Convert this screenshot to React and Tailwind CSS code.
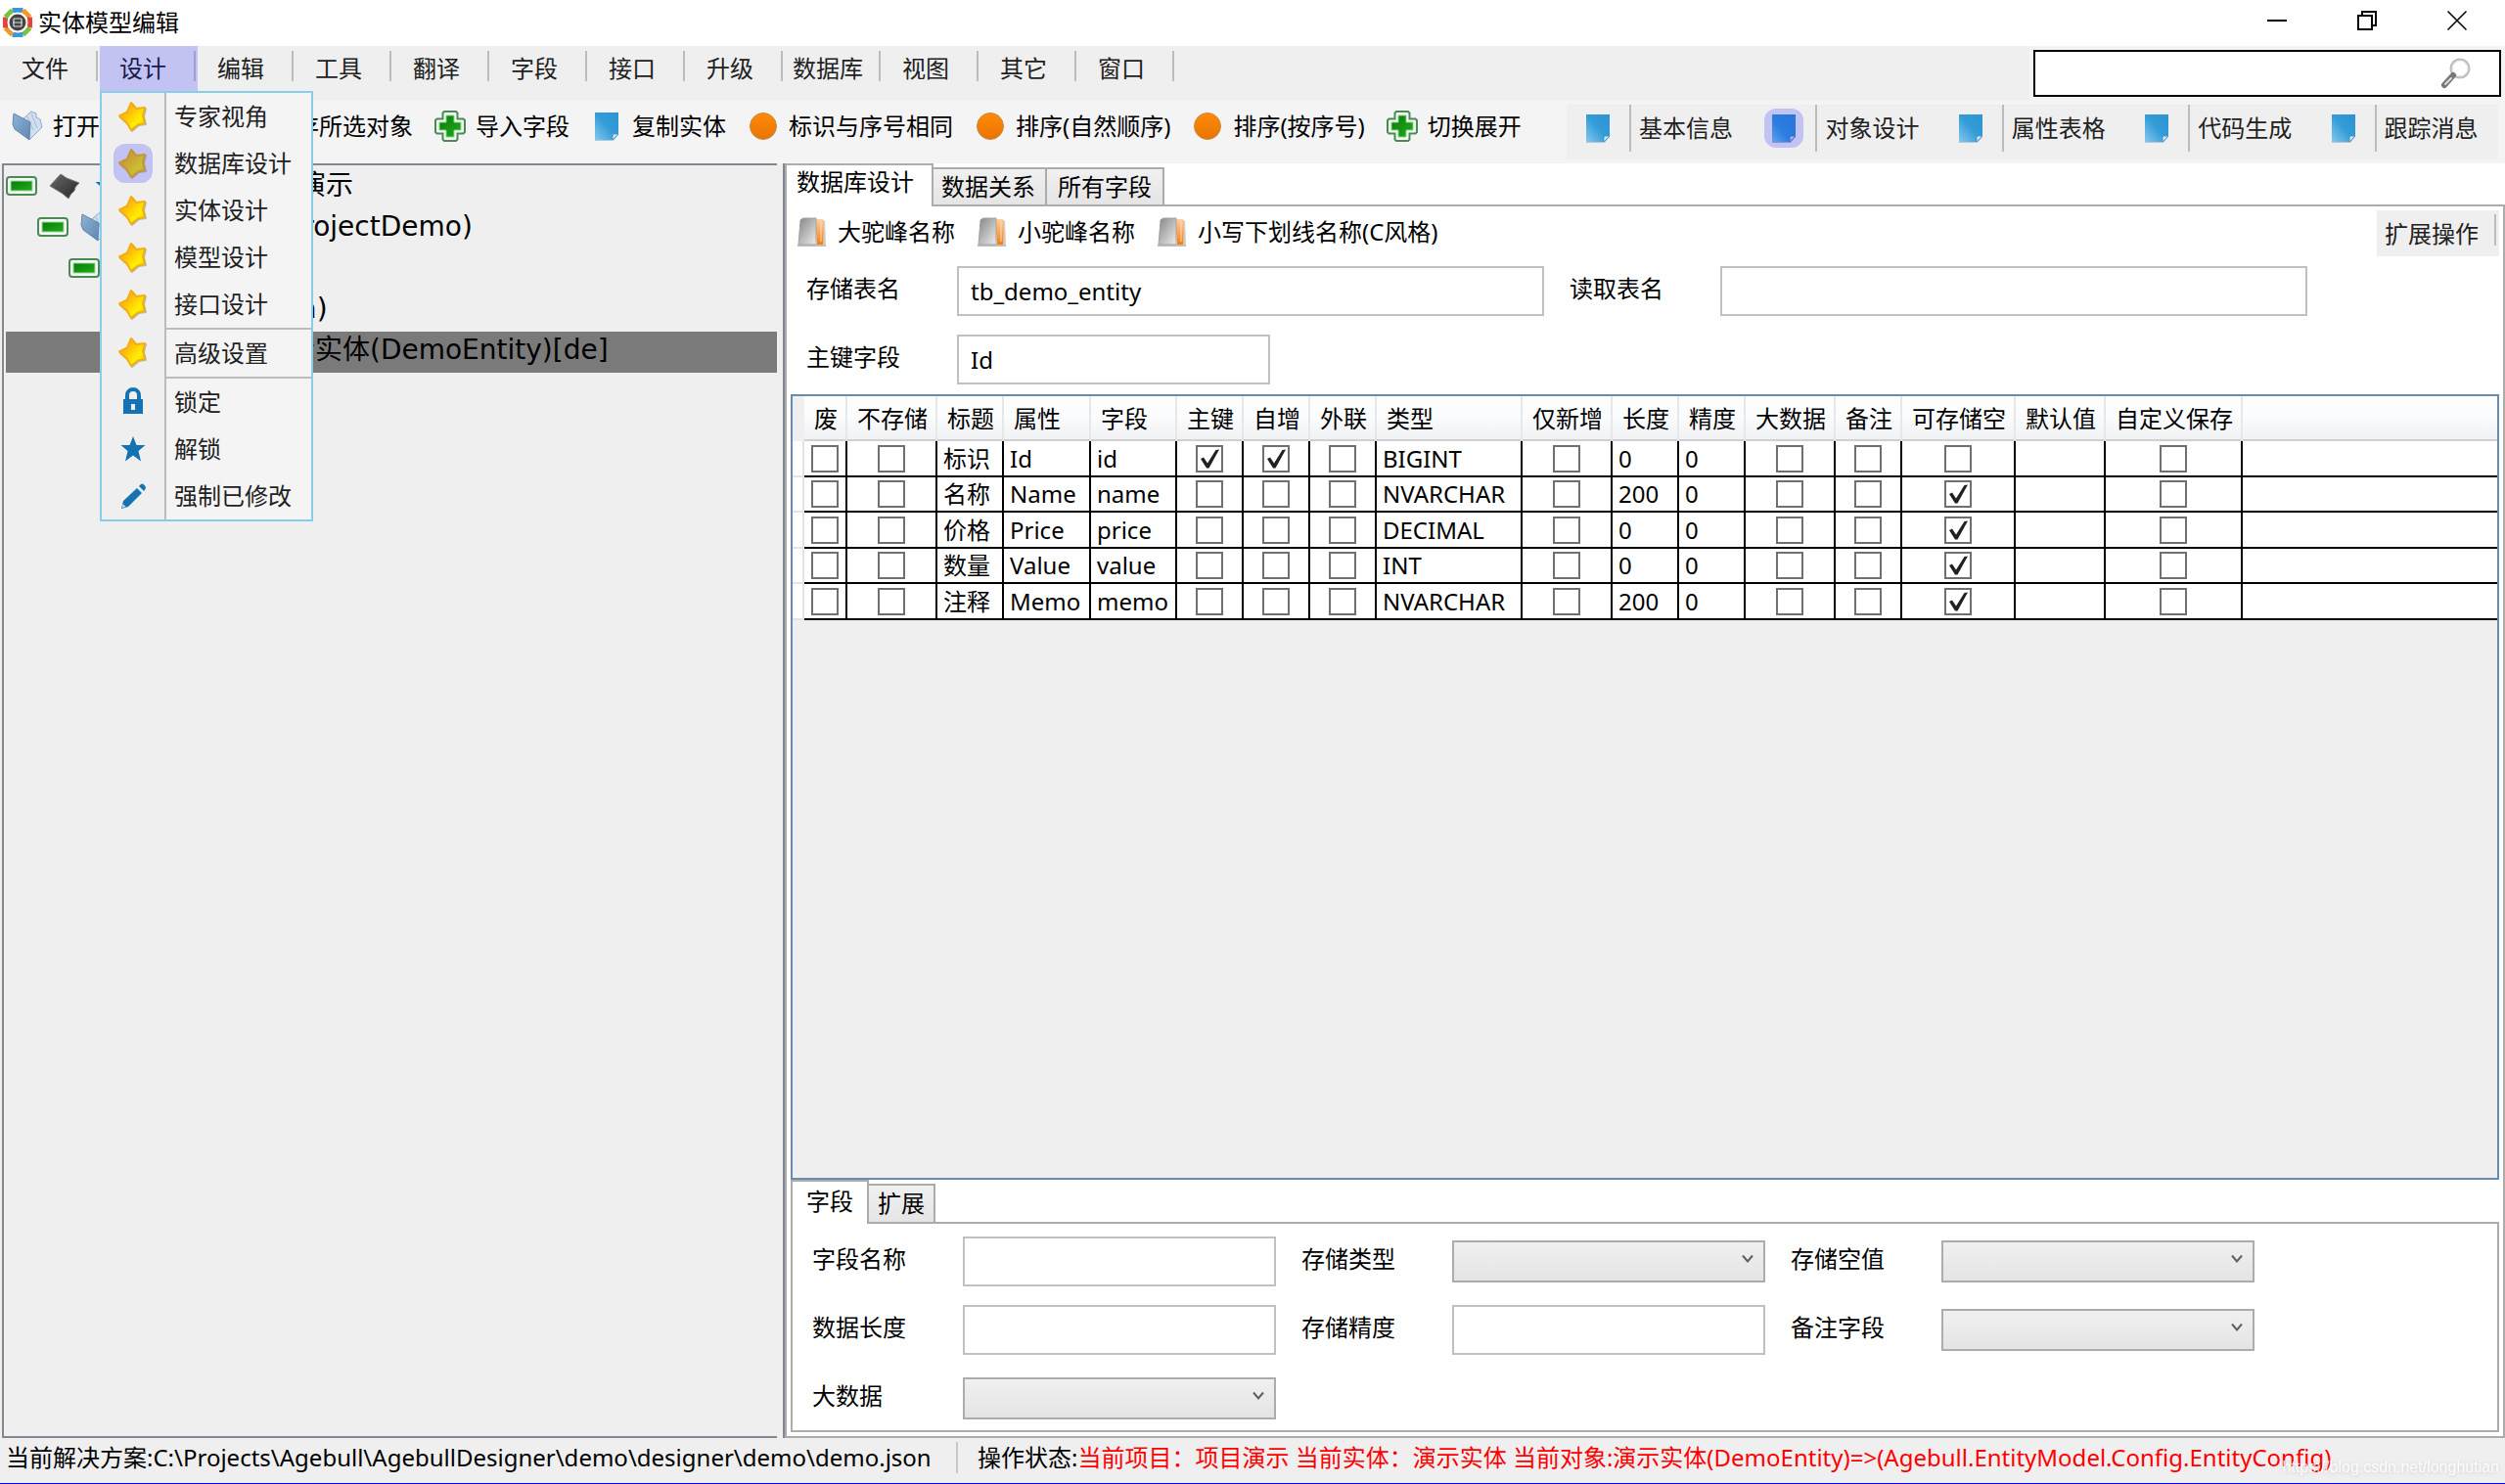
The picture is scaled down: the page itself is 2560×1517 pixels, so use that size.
import React from 'react'

const menus = ['文件', '设计', '编辑', '工具', '翻译', '字段', '接口', '升级', '数据库', '视图', '其它', '窗口']

const designMenu = [
  { label: '专家视角', icon: 'star' },
  { label: '数据库设计', icon: 'star', active: true },
  { label: '实体设计', icon: 'star' },
  { label: '模型设计', icon: 'star' },
  { label: '接口设计', icon: 'star' },
  { label: '高级设置', icon: 'star', divided: true },
  { label: '锁定', icon: 'lock', divided: true },
  { label: '解锁', icon: 'blueStar' },
  { label: '强制已修改', icon: 'pencil' },
]

const tools = [
  { label: '打开', icon: 'folder' },
  { label: '保存', icon: 'page' },
  { label: '保存所选对象', icon: 'page' },
  { label: '导入字段', icon: 'plus' },
  { label: '复制实体', icon: 'page' },
  { label: '标识与序号相同', icon: 'circle' },
  { label: '排序(自然顺序)', icon: 'circle' },
  { label: '排序(按序号)', icon: 'circle' },
  { label: '切换展开', icon: 'plus' },
]

const views = ['基本信息', '对象设计', '属性表格', '代码生成', '跟踪消息']

const columns = [
  { key: 'discard', title: '废', width: 'w-[44px]', check: true },
  { key: 'noStore', title: '不存储', width: 'w-[92px]', check: true },
  { key: 'caption', title: '标题', width: 'w-[68px]' },
  { key: 'prop', title: '属性', width: 'w-[89px]' },
  { key: 'field', title: '字段', width: 'w-[88px]' },
  { key: 'primary', title: '主键', width: 'w-[68px]', check: true },
  { key: 'identity', title: '自增', width: 'w-[68px]', check: true },
  { key: 'link', title: '外联', width: 'w-[68px]', check: true },
  { key: 'type', title: '类型', width: 'w-[149px]' },
  { key: 'insertOnly', title: '仅新增', width: 'w-[92px]', check: true },
  { key: 'length', title: '长度', width: 'w-[68px]' },
  { key: 'scale', title: '精度', width: 'w-[68px]' },
  { key: 'blob', title: '大数据', width: 'w-[92px]', check: true },
  { key: 'memo', title: '备注', width: 'w-[68px]', check: true },
  { key: 'nullable', title: '可存储空', width: 'w-[116px]', check: true },
  { key: 'initial', title: '默认值', width: 'w-[92px]' },
  { key: 'custom', title: '自定义保存', width: 'w-[140px]', check: true },
]

const rows = [
  { caption: '标识', prop: 'Id', field: 'id', type: 'BIGINT', length: 0, scale: 0, primary: true, identity: true },
  { caption: '名称', prop: 'Name', field: 'name', type: 'NVARCHAR', length: 200, scale: 0, nullable: true },
  { caption: '价格', prop: 'Price', field: 'price', type: 'DECIMAL', length: 0, scale: 0, nullable: true },
  { caption: '数量', prop: 'Value', field: 'value', type: 'INT', length: 0, scale: 0, nullable: true },
  { caption: '注释', prop: 'Memo', field: 'memo', type: 'NVARCHAR', length: 200, scale: 0, nullable: true },
]

const Gradients = () => (
  <svg className="absolute h-0 w-0" aria-hidden="true">
    <defs>
      <linearGradient id="gold" x1="0" y1="0" x2="1" y2="1">
        <stop offset="0" stopColor="#ff9c00" />
        <stop offset="0.4" stopColor="#ffc20a" />
        <stop offset="0.7" stopColor="#fff000" />
        <stop offset="1" stopColor="#ffc400" />
      </linearGradient>
      <linearGradient id="sheet" x1="1" y1="0" x2="0" y2="1">
        <stop offset="0" stopColor="#2a93d1" />
        <stop offset="0.5" stopColor="#349dd8" />
        <stop offset="1" stopColor="#86c8ee" />
      </linearGradient>
      <linearGradient id="sheetOn" x1="1" y1="0" x2="0" y2="1">
        <stop offset="0" stopColor="#2a74d8" />
        <stop offset="0.6" stopColor="#2c7ee0" />
        <stop offset="1" stopColor="#5fa3ee" />
      </linearGradient>
      <linearGradient id="orange" x1="0" y1="0" x2="0" y2="1">
        <stop offset="0" stopColor="#ff8a08" />
        <stop offset="1" stopColor="#e87400" />
      </linearGradient>
      <linearGradient id="green" x1="0" y1="0" x2="1" y2="1">
        <stop offset="0" stopColor="#0a7a0a" />
        <stop offset="1" stopColor="#1fae1a" />
      </linearGradient>
      <linearGradient id="steel" x1="0" y1="0" x2="1" y2="1">
        <stop offset="0" stopColor="#8fb2d6" />
        <stop offset="1" stopColor="#5f87b3" />
      </linearGradient>
      <linearGradient id="silver" x1="0" y1="0" x2="1" y2="1">
        <stop offset="0" stopColor="#858585" />
        <stop offset="1" stopColor="#ececec" />
      </linearGradient>
      <linearGradient id="amber" x1="0" y1="0" x2="0" y2="1">
        <stop offset="0" stopColor="#ffcf9e" />
        <stop offset="1" stopColor="#f57c0a" />
      </linearGradient>
      <linearGradient id="coal" x1="0" y1="0" x2="1" y2="1">
        <stop offset="0" stopColor="#6a6a6a" />
        <stop offset="1" stopColor="#262626" />
      </linearGradient>
    </defs>
  </svg>
)

const shapes = {
  star: (
    <>
      <path d="M15 3L20 9L29 8L27 16L29 24L22 25L15 31L11 24L3 17L11 12Z" fill="#8f8570" stroke="#8f8570" strokeWidth="2" strokeLinejoin="round" opacity="0.5" />
      <path d="M14 2L19 8L28 7L26 15L28 23L21 24.500L14 30L10 23L2 15.500L10 11.500Z" fill="url(#gold)" stroke="#f5ae10" strokeWidth="2" strokeLinejoin="round" />
    </>
  ),
  page: (
    <>
      <path d="M4 3H28V25L23 31H4Z" fill="#9bb4c4" opacity="0.7" />
      <path d="M4 2H28V24L22 30H4Z" fill="url(#sheet)" />
      <path d="M28 24H23.500Q22 24 22 25.500V30Z" fill="#cfe6f5" stroke="#3b8fc2" strokeWidth="0.8" />
    </>
  ),
  pageOn: (
    <>
      <path d="M4 3H28V25L23 31H4Z" fill="#6f7fc0" opacity="0.7" />
      <path d="M4 2H28V24L22 30H4Z" fill="url(#sheetOn)" />
      <path d="M28 24H23.500Q22 24 22 25.500V30Z" fill="#9db4f0" stroke="#2f62c4" strokeWidth="0.8" />
    </>
  ),
  plus: (
    <>
      <path d="M10 1H22L23.500 2.500V8.500H29.500L31 10V22L29.500 23.500H23.500V29.500L22 31H10L8.500 29.500V23.500H2.500L1 22V10L2.500 8.500H8.500V2.500Z" fill="#f3faf3" stroke="#4c8a55" strokeWidth="2" />
      <path d="M12 5H20V12H27V20H20V27H12V20H5V12H12Z" fill="url(#green)" stroke="#8fcf8f" strokeWidth="1" />
    </>
  ),
  circle: <circle cx="16" cy="16" r="13.500" fill="url(#orange)" stroke="#c98a48" />,
  folder: (
    <>
      <path d="M11 9L20 1L25 3V7L29 9L31 17L18 30L12 22Z" fill="#cfdfef" stroke="#8fa9c4" />
      <path d="M16 6L22 20M20 3L26 18" stroke="#a5bfd9" />
      <path d="M2 3L19 12L18 30L3 19L1 14Z" fill="url(#steel)" stroke="#6486ab" />
    </>
  ),
  book: (
    <>
      <path d="M1 29H30V31H1Z" fill="#000" opacity="0.25" />
      <path d="M26 3L29 5L30 29H26Z" fill="#cfcac6" />
      <path d="M19 3H26L28 6L27 29H21Z" fill="url(#amber)" />
      <path d="M25 5L25 26" stroke="#ffdcb8" />
      <path d="M4 4Q5 2 8 2H20V29H2Z" fill="url(#silver)" stroke="#a4a4a4" />
    </>
  ),
  diamond: (
    <path d="M1 16L12 4L18 8L31 13Q26 17 26 21Q22 24 20 29L14 24Z" fill="url(#coal)" stroke="#777" />
  ),
  lock: (
    <path d="M6 14H8V10A8 8 0 0 1 24 10V14H26V29H6ZM12 14H20V10A4 4 0 0 0 12 10ZM14 19V25H18V19Z" fill="#1573b3" fillRule="evenodd" />
  ),
  blueStar: (
    <path d="M16 3L19.500 12H28.500L21.500 18L24 28.500L16 22.500L8 28.500L10.500 18L3.500 12H12.500Z" fill="#1573b3" />
  ),
  pencil: (
    <>
      <path d="M20 8L25 13L11 27L4 29L6 21Z" fill="#1573b3" />
      <path d="M22 6L24 4Q25.500 3 27 4.500L28.500 6Q29.500 7.500 28.500 9L27 11Z" fill="#1573b3" />
      <path d="M5.500 24L8.500 27L5 28Z" fill="#cfe3f2" />
    </>
  ),
}

const Icon = ({ name }) => (
  <svg viewBox="0 0 32 32" className="h-8 w-8 shrink-0" fill="none" aria-hidden="true">
    {shapes[name]}
  </svg>
)

const Expander = () => (
  <button className="shrink-0" aria-label="折叠">
    <svg viewBox="0 0 32 20" className="h-5 w-8" fill="none">
      <rect x="1" y="1" width="30" height="18" rx="3" fill="#f3faf3" stroke="#4c8a55" strokeWidth="2" />
      <rect x="5" y="5" width="22" height="10" fill="url(#green)" stroke="#a5d6a5" />
    </svg>
  </button>
)

const Logo = () => (
  <svg viewBox="0 0 30 30" className="h-[30px] w-[30px]" fill="none">
    <g strokeWidth="5">
      <path d="M9.500 2.500H20.500" stroke="#3a97dc" />
      <path d="M20.500 2.500L27.500 9.500" stroke="#f09a2c" />
      <path d="M27.500 9.500V20.500" stroke="#e8403c" />
      <path d="M27.500 20.500L20.500 27.500" stroke="#74c43c" />
      <path d="M20.500 27.500H9.500" stroke="#3a97dc" />
      <path d="M9.500 27.500L2.500 20.500" stroke="#f09a2c" />
      <path d="M2.500 20.500V9.500" stroke="#e8403c" />
      <path d="M2.500 9.500L9.500 2.500" stroke="#74c43c" />
    </g>
    <circle cx="15" cy="15" r="10.500" fill="#fff" />
    <circle cx="15" cy="15" r="8.500" fill="#444" />
    <path d="M11 11H19M10 15H20M11 19H19M11 11V19M19 11V19" stroke="#ddd" strokeWidth="1.200" />
  </svg>
)

const TitleBar = () => (
  <header className="flex h-[47px] shrink-0 items-start justify-between bg-white px-[3px]">
    <div className="flex items-center gap-1.5 pt-[7px]">
      <Logo />
      <h1 className="leading-8">实体模型编辑</h1>
    </div>
    <div className="flex">
      <button className="flex h-[42px] w-[92px] items-center justify-center" aria-label="最小化">
        <svg viewBox="0 0 20 20" className="h-5 w-5" stroke="#000" strokeWidth="2">
          <path d="M0 10H20" />
        </svg>
      </button>
      <button className="flex h-[42px] w-[92px] items-center justify-center" aria-label="还原">
        <svg viewBox="0 0 20 20" className="h-5 w-5" stroke="#000" strokeWidth="2" fill="none">
          <path d="M1 5H15V19H1ZM5 5V1H19V15H15" />
        </svg>
      </button>
      <button className="flex h-[42px] w-[92px] items-center justify-center" aria-label="关闭">
        <svg viewBox="0 0 20 20" className="h-5 w-5" stroke="#000" strokeWidth="1.500">
          <path d="M0.500 0.500L19.500 19.500M19.500 0.500L0.500 19.500" />
        </svg>
      </button>
    </div>
  </header>
)

const DesignMenu = () => (
  <ul className="absolute left-0 top-full z-20 w-[218px] border-2 border-[#87ceeb] bg-[#f4f4f4] text-[#212121]">
    {designMenu.map((item) => (
      <li key={item.label}>
        <button className="flex w-full text-left">
          <span className="flex w-16 shrink-0 items-center justify-center bg-[#efefef]">
            <span className={item.active ? 'rounded-xl bg-[#c3c3f3] p-1' : 'p-1'}>
              <span className={item.active ? 'block opacity-80 brightness-80' : 'block'}>
                <Icon name={item.icon} />
              </span>
            </span>
          </span>
          <span
            className={
              item.divided
                ? 'box-content h-12 flex-1 border-l-2 border-t-2 border-[#bcbcbc] pl-2 leading-[48px]'
                : 'h-12 flex-1 border-l-2 border-[#bcbcbc] pl-2 leading-[48px]'
            }
          >
            {item.label}
          </span>
        </button>
      </li>
    ))}
  </ul>
)

const MenuBar = () => (
  <div className="flex h-14 shrink-0 justify-between pl-0.5">
    <nav className="flex flex-1 items-start bg-[#efefef] text-[#212121]">
      {menus.map((name) => (
        <div key={name} className="relative">
          <button
            className={
              name === '设计'
                ? 'flex h-[46px] w-[100px] items-start bg-[#c3c3f3] pt-[5px] text-[#1a1a4a]'
                : 'flex h-[46px] w-[100px] items-start pt-[5px]'
            }
          >
            <span className="w-[88px] text-center leading-9">{name}</span>
            <span className={name === '设计' ? 'ml-2 h-[31px] w-0.5 bg-[#a0a0c8]' : 'ml-2 h-[31px] w-0.5 bg-[#bcbcbc]'} />
          </button>
          {name === '设计' && <DesignMenu />}
        </div>
      ))}
    </nav>
    <div className="bg-[#f4f4f4] px-1 pt-1">
      <label className="flex h-12 w-[478px] items-center border-2 border-black bg-white pr-7">
        <input type="text" aria-label="搜索" className="h-full min-w-0 flex-1 px-2 outline-none" />
        <svg viewBox="0 0 32 32" className="h-8 w-8" fill="none">
          <circle cx="20" cy="11" r="9" stroke="#bdbdbd" strokeWidth="3" />
          <circle cx="20" cy="11" r="8" stroke="#efefef" />
          <path d="M13 18L4 28" stroke="#777" strokeWidth="6" strokeLinecap="round" />
          <path d="M11 21L5 27" stroke="#ddd" strokeWidth="2" strokeLinecap="round" />
        </svg>
      </label>
    </div>
  </div>
)

const ToolButton = ({ icon, label }) => (
  <button className="flex items-center gap-2.5 whitespace-nowrap">
    <Icon name={icon} />
    <span className="leading-8">{label}</span>
  </button>
)

const ToolBar = () => (
  <div className="flex h-16 shrink-0 justify-between bg-[#f4f4f4] pl-3 pr-[7px]">
    <div className="flex items-start gap-[22px] pt-2.5">
      {tools.map((tool) => (
        <ToolButton key={tool.label} icon={tool.icon} label={tool.label} />
      ))}
    </div>
    <div className="mt-1 grid h-14 w-[952px] grid-cols-5 bg-[#efefef] text-[#212121]">
      {views.map((view) => (
        <button key={view} className="flex h-12 items-center text-left">
          <span className="flex w-16 justify-center">
            <span className={view === '对象设计' ? 'rounded-xl bg-[#c3c3f3] p-1' : 'p-1'}>
              <Icon name={view === '对象设计' ? 'pageOn' : 'page'} />
            </span>
          </span>
          <span className="h-full whitespace-nowrap border-l-2 border-[#bcbcbc] pl-2 leading-[48px]">{view}</span>
        </button>
      ))}
    </div>
  </div>
)

const TreeRow = ({ indent = '', expander = false, icons = [], selected = false, children }) => (
  <li className={selected ? 'h-[42px] bg-[#7a7a7a]' : 'h-[42px]'}>
    <div className={`flex h-[38px] items-center gap-3 ${indent}`}>
      {expander ? <Expander /> : <span className="w-8" />}
      {icons.map((name, index) => (
        <Icon key={index} name={name} />
      ))}
      <span className="whitespace-nowrap">{children}</span>
    </div>
  </li>
)

const ModelTree = () => (
  <aside className="w-[792px] shrink-0 border-y-2 border-l-2 border-[#828790] pl-0.5 pt-0.5">
    <ul className="font-['DejaVu_Sans','Noto_Sans_CJK_SC',sans-serif] text-[28px] leading-9">
      <TreeRow expander icons={['diamond', 'blueStar']}>Demo - 项目演示</TreeRow>
      <TreeRow indent="pl-8" expander icons={['folder', 'blueStar']}>项目演示(ProjectDemo)</TreeRow>
      <TreeRow indent="pl-16" expander icons={['folder']}>实体</TreeRow>
      <TreeRow indent="pl-24" icons={['page']}>实体(Data)</TreeRow>
      <TreeRow indent="pl-32" selected icons={['page', 'blueStar']}>演示实体(DemoEntity)[de]</TreeRow>
    </ul>
  </aside>
)

const Field = ({ id, label, type = 'text', value = '', width = 'w-80', labelWidth = 'w-[154px]' }) => (
  <div className="flex h-[51px] items-center">
    <label htmlFor={id} className={`${labelWidth} shrink-0 pb-1.5 leading-8`}>{label}</label>
    {type === 'select' ? (
      <div className={`relative ${width}`}>
        <select
          id={id}
          className="block h-[43px] w-full appearance-none border-2 border-[#acacac] bg-linear-to-b from-[#f0f0f0] to-[#e4e4e4]"
        />
        <svg viewBox="0 0 12 10" className="pointer-events-none absolute right-3 top-3.5 h-2.5 w-3" fill="none" stroke="#606060" strokeWidth="2">
          <path d="M1 1.500L6 7.500L11 1.500" />
        </svg>
      </div>
    ) : (
      <input
        id={id}
        type="text"
        defaultValue={value}
        className={`h-[51px] border-2 border-[#c0c0c0] bg-white px-3 outline-none ${width}`}
      />
    )}
  </div>
)

const CheckBox = ({ checked, label }) => (
  <span className="relative mx-auto block h-7 w-7">
    <input
      type="checkbox"
      defaultChecked={checked}
      aria-label={label}
      className="peer block h-7 w-7 appearance-none border-2 border-[#707070] bg-white"
    />
    <svg viewBox="0 0 28 28" className="pointer-events-none absolute inset-0 hidden h-7 w-7 peer-checked:block">
      <path d="M5 14L8 12.500L12 18.500L20.500 5L24 4.500L13.500 23.500H11Z" fill="#212121" />
    </svg>
  </span>
)

const FieldTable = () => (
  <div className="flex-1 border-2 border-[#688caf] bg-[#efefef]">
    <table className="w-full table-fixed border-separate border-spacing-0 text-left">
      <thead>
        <tr className="h-[46px] bg-linear-to-b from-white via-[#fafbfc] to-[#eff0f3]">
          <th className="w-3 bg-[#efefef]" />
          {columns.map((col) => (
            <th
              key={col.key}
              className={`whitespace-nowrap border-b-2 border-r-2 border-b-[#d0d0d0] border-r-[#e6e7e9] p-0 pl-2.5 pt-0.5 font-normal leading-8 ${col.width}`}
            >
              {col.title}
            </th>
          ))}
          <th className="border-b-2 border-[#d0d0d0]" />
        </tr>
      </thead>
      <tbody>
        {rows.map((row) => (
          <tr key={row.prop} className="bg-white odd:h-[37px] even:h-[36px]">
            <td className="border-b-2 border-r-2 border-[#e4e4e4] p-0" />
            {columns.map((col) => (
              <td key={col.key} className="whitespace-nowrap border-b-2 border-r-2 border-black p-0 leading-8">
                {col.check ? (
                  <CheckBox checked={!!row[col.key]} label={`${row.caption} ${col.title}`} />
                ) : (
                  <span className="block pl-1.5">{row[col.key]}</span>
                )}
              </td>
            ))}
            <td className="border-b-2 border-black p-0" />
          </tr>
        ))}
      </tbody>
    </table>
  </div>
)

const FieldDetail = () => (
  <section className="shrink-0">
    <div className="flex h-[45px] items-end" role="tablist">
      <button role="tab" aria-selected="true" className="relative z-10 h-[45px] w-20 border-x-2 border-t-2 border-[#acacac] bg-white pb-1">
        字段
      </button>
      <button role="tab" className="-ml-0.5 h-[41px] w-[70px] border-2 border-[#acacac] bg-linear-to-b from-[#f0f0f0] to-[#e5e5e5] pb-0.5 leading-8">
        扩展
      </button>
      <span className="h-0.5 flex-1 bg-[#acacac]" />
    </div>
    <div className="flex h-[213px] flex-col gap-[19px] border-x-2 border-b-2 border-[#acacac] pl-5 pt-[13px]">
      <div className="flex gap-[26px]">
        <Field id="name" label="字段名称" />
        <Field id="storeType" label="存储类型" type="select" />
        <Field id="storeNull" label="存储空值" type="select" />
      </div>
      <div className="flex gap-[26px]">
        <Field id="dataLength" label="数据长度" />
        <Field id="storeScale" label="存储精度" />
        <Field id="memoField" label="备注字段" type="select" />
      </div>
      <Field id="blob" label="大数据" type="select" />
    </div>
  </section>
)

const Designer = () => (
  <main className="flex min-w-0 flex-1 flex-col border-l-2 border-[#828790] bg-white">
    <div className="flex h-11 shrink-0 items-end" role="tablist">
      <button role="tab" aria-selected="true" className="relative z-10 h-11 w-[152px] border-x-2 border-t-2 border-[#acacac] bg-white pb-2 pl-2.5 text-left leading-8">
        数据库设计
      </button>
      <button role="tab" className="-ml-1 h-10 w-[120px] border-2 border-[#acacac] bg-linear-to-b from-[#f0f0f0] to-[#e5e5e5] leading-8">
        数据关系
      </button>
      <button role="tab" className="h-10 w-[120px] border-y-2 border-r-2 border-[#acacac] bg-linear-to-b from-[#f0f0f0] to-[#e5e5e5] leading-8">
        所有字段
      </button>
      <span className="h-0.5 flex-1 bg-[#acacac]" />
    </div>
    <div className="flex flex-1 flex-col border-x-2 border-b-2 border-[#acacac] px-1 pb-1">
      <div className="flex items-start justify-between pt-1">
        <div className="flex gap-[22px] pl-1.5 pt-1.5">
          <ToolButton icon="book" label="大驼峰名称" />
          <ToolButton icon="book" label="小驼峰名称" />
          <ToolButton icon="book" label="小写下划线名称(C风格)" />
        </div>
        <button className="flex h-[47px] w-[125px] items-start justify-between bg-[#efefef] pl-2 pr-[3px] pt-1 text-[#212121]">
          <span className="leading-10">扩展操作</span>
          <span className="h-8 w-0.5 bg-[#bcbcbc]" />
        </button>
      </div>
      <div className="flex flex-col gap-[19px] pb-2.5 pl-4 pt-2.5">
        <div className="flex gap-[26px]">
          <Field id="saveTable" label="存储表名" value="tb_demo_entity" width="w-[600px]" />
          <Field id="readTable" label="读取表名" width="w-[600px]" />
        </div>
        <Field id="primaryKey" label="主键字段" value="Id" />
      </div>
      <FieldTable />
      <FieldDetail />
    </div>
  </main>
)

const StatusBar = () => (
  <footer className="relative flex h-[47px] shrink-0 items-start whitespace-nowrap border-b border-[#0000ff] pl-1.5 pt-1">
    <span className="w-[971px] leading-8">当前解决方案:C:\Projects\Agebull\AgebullDesigner\demo\designer\demo\demo.json</span>
    <span className="mr-5 h-8 w-0.5 bg-[#c8c8c8]" />
    <span className="leading-8">操作状态:</span>
    <span className="leading-8 text-[#ff0000]">
      当前项目：项目演示 当前实体：演示实体 当前对象:演示实体(DemoEntity)=&gt;(Agebull.EntityModel.Config.EntityConfig)
    </span>
    <span className="absolute bottom-1 right-1.5 font-['Liberation_Sans'] text-base leading-6 text-white/80 drop-shadow-sm">
      https://blog.csdn.net/longhutian
    </span>
  </footer>
)

export default function App() {
  return (
    <div className="flex min-h-screen flex-col bg-[#efefef] font-['Noto_Sans','Noto_Sans_CJK_SC',sans-serif] text-2xl text-black">
      <Gradients />
      <TitleBar />
      <MenuBar />
      <ToolBar />
      <div className="flex flex-1 gap-1.5 pl-0.5">
        <ModelTree />
        <Designer />
      </div>
      <StatusBar />
    </div>
  )
}
